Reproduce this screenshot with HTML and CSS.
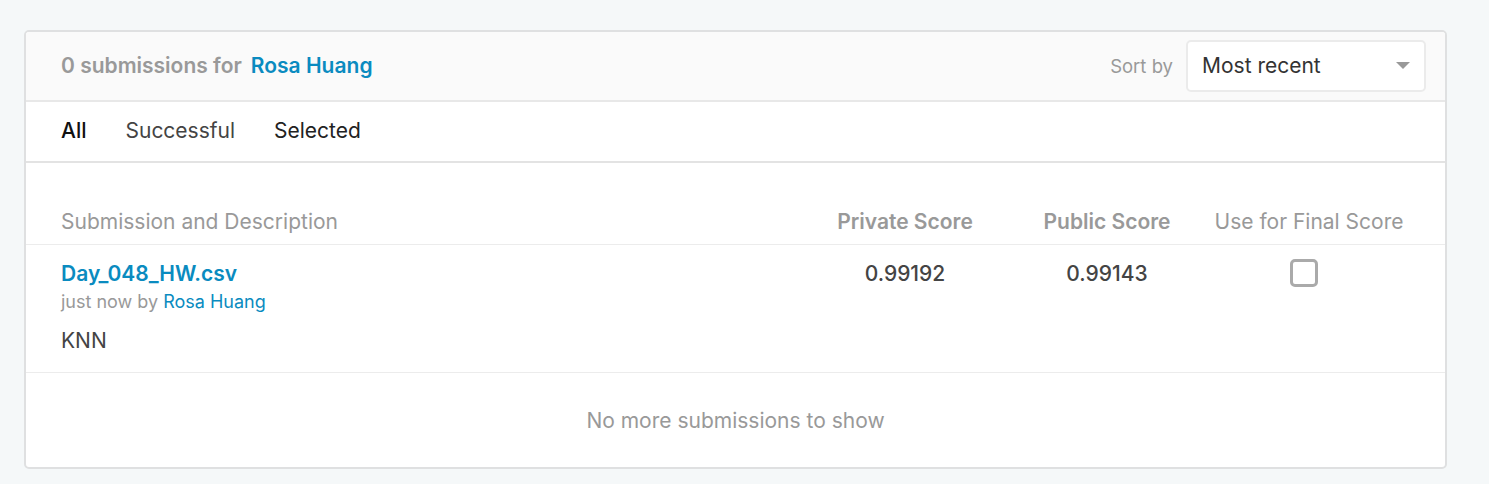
FILE: index.html
```html
<!DOCTYPE html>
<html>
<head>
<meta charset="utf-8">
<link rel="stylesheet" href="styles.css">
</head>
<body>
<div class="page">
  <section class="card">
    <header class="card-head">
      <h2 class="title"><span class="count">0 submissions for</span><a class="user">Rosa Huang</a></h2>
      <div class="sort">
        <span class="sort-label">Sort by</span>
        <div class="select">
          <span>Most recent</span>
          <span class="caret"></span>
        </div>
      </div>
    </header>
    <nav class="tabs">
      <span class="tab active">All</span>
      <span class="tab muted">Successful</span>
      <span class="tab">Selected</span>
    </nav>
    <div class="table">
      <div class="row head">
        <div class="c-desc">Submission and Description</div>
        <div class="c-score strong">Private Score</div>
        <div class="c-score strong">Public Score</div>
        <div class="c-use">Use for Final Score</div>
      </div>
      <div class="row body">
        <div class="c-desc">
          <a class="file">Day_048_HW.csv</a>
          <div class="meta">just now by <a class="by">Rosa Huang</a></div>
          <div class="desc">KNN</div>
        </div>
        <div class="c-score val">0.99192</div>
        <div class="c-score val">0.99143</div>
        <div class="c-use"><span class="check"></span></div>
      </div>
    </div>
    <div class="foot">No more submissions to show</div>
  </section>
</div>
</body>
</html>
```
FILE: styles.css
```css
* { box-sizing: border-box; }
html, body { margin: 0; padding: 0; background: #f5f8f9; }
body { font-family: Inter, Roboto, "Liberation Sans", sans-serif; color: #333; }
.page { padding: 30px 42px 16px 24px; }
.card {
  background: #fff;
  border: 2px solid #dfe0e1;
  border-radius: 5px;
  overflow: hidden;
}
.card-head {
  height: 70px;
  background: #fafafa;
  border-bottom: 2px solid #e8e8e8;
  display: flex;
  align-items: center;
  justify-content: space-between;
  padding: 0 19px 1px 35px;
}
.title { margin: 0; font-size: 21px; font-weight: 600; display: flex; gap: 9px; }
.count { color: #999; }
.user { color: #0a8bc0; }
.sort { display: flex; align-items: center; gap: 13px; }
.sort-label { color: #999; font-size: 18.5px; }
.select {
  width: 240px; height: 52px;
  background: #fff;
  border: 2px solid #ebebeb;
  border-radius: 5px;
  display: flex; align-items: center; justify-content: space-between;
  padding: 0 14px 0 14px;
  font-size: 21px; color: #333;
}
.caret {
  width: 0; height: 0;
  border-left: 7px solid transparent;
  border-right: 7px solid transparent;
  border-top: 7px solid #999;
}
.tabs {
  height: 61px;
  border-bottom: 2px solid #e3e3e3;
  display: flex; align-items: center;
  padding: 0 35px 3px;
  gap: 39px;
  font-size: 21px;
}
.tab { color: #222; }
.tab.active { font-weight: 500; color: #111; }
.tab.muted { color: #444; }
.table { padding-top: 46px; }
.row { display: flex; padding: 0 35px; }
.row.head { height: 36px; border-bottom: 1px solid #ececec; font-size: 21px; color: #999; }
.c-desc { flex: 1; }
.c-score { width: 202px; text-align: center; }
.c-use { width: 202px; text-align: center; }
.strong { font-weight: 600; }
.row.body { height: 128px; border-bottom: 1px solid #ececec; padding-top: 16px; }
.file { color: #0a8bc0; font-weight: 600; font-size: 21px; }
.meta { color: #999; font-size: 18px; margin-top: 5px; }
.by { color: #0a8bc0; }
.desc { font-size: 21px; color: #444; margin-top: 16px; }
.val { font-size: 21px; font-weight: 500; color: #444; }
.check {
  display: inline-block;
  width: 28px; height: 28px;
  border: 3px solid #aaa;
  border-radius: 5px;
  margin-top: -2px;
  margin-left: -10px;
}
.foot { height: 94px; display: flex; align-items: center; justify-content: center; font-size: 21px; color: #999; }
```
